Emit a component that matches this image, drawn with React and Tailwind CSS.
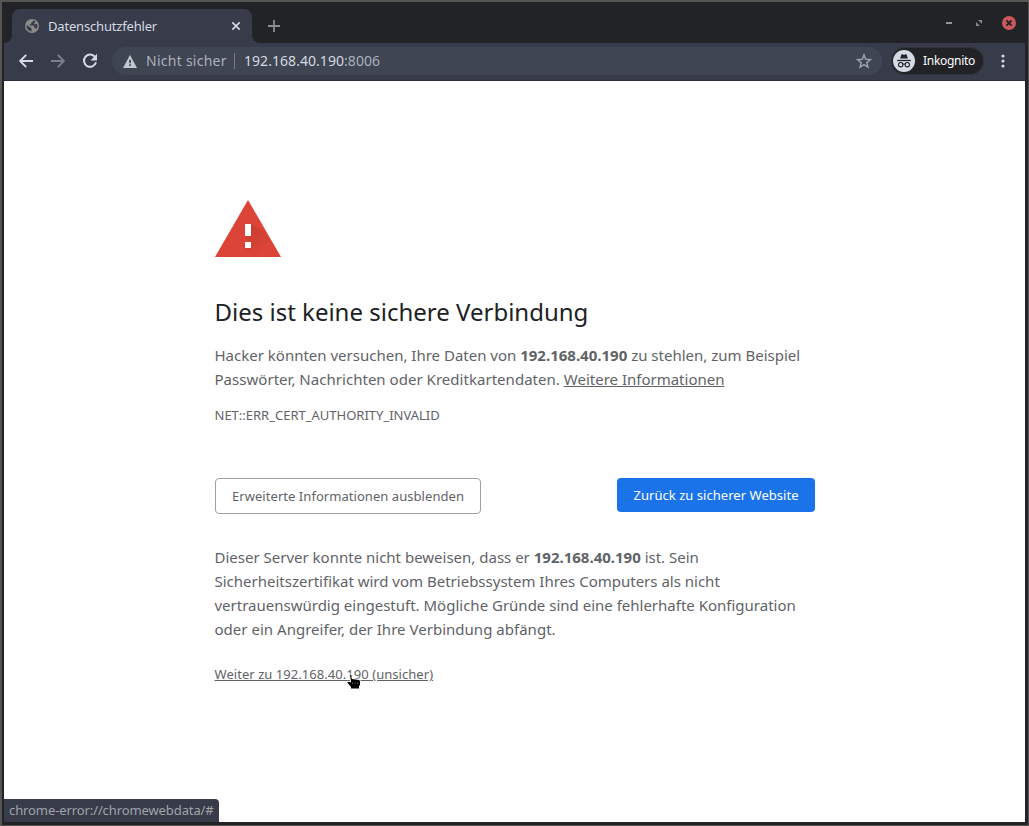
import React from "react";

function TabCurve({ flip }) {
  return (
    <svg width="8" height="8" viewBox="0 0 8 8" className={flip ? "-scale-x-100" : ""}>
      <path d="M8 0v8H0a8 8 0 0 0 8-8z" fill="#383c4a" />
    </svg>
  );
}

function TabStrip() {
  return (
    <div className="flex h-[41px] items-end bg-[#222327]">
      <TabCurve />
      <div className="flex h-[34px] w-[240px] shrink-0 items-center rounded-t-lg bg-[#383c4a] pr-[11px] pl-[13px]">
        <svg width="14" height="14" viewBox="0 0 14 14" className="shrink-0">
          <circle cx="7" cy="7" r="7" fill="#8c8c8b" />
          <path d="M1.5 5.8 4.6 8.2q1.9.2 1.9 1.4v2.8A5.6 5.6 0 0 1 1.5 5.8z" fill="#383c4a" />
          <path d="M7.8 1.5v1.4L6.2 3.8v1.5H4.6v1.3h3.6l1.1 1v1.6h1.4l.9.8a5.6 5.6 0 0 0 .5-5.2L9.2 5.6V4l1.4-1.4A5.6 5.6 0 0 0 7.8 1.5z" fill="#383c4a" />
        </svg>
        <span className="ml-[9px] flex-1 text-[13px] leading-[18px] tracking-[-0.18px] text-[#d3dae3]">Datenschutzfehler</span>
        <svg width="10" height="10" viewBox="0 0 10 10">
          <path d="m1.3 1.3 7.4 7.4m0-7.4L1.3 8.7" stroke="#d3dae3" strokeWidth="1.7" />
        </svg>
      </div>
      <TabCurve flip />
      <svg width="12" height="12" viewBox="0 0 12 12" className="mb-[11px] ml-2">
        <path d="M6 0v12M0 6h12" stroke="#8c8c8e" strokeWidth="1.8" />
      </svg>
      <div className="mr-[9px] mb-[13px] ml-auto flex items-center">
        <span className="h-[2px] w-[6px] bg-[#929497]" />
        <svg width="6" height="6" viewBox="0 0 6 6" className="ml-6">
          <path d="M2 0h4v4zM0 2v4h4z" fill="#858789" />
        </svg>
        <svg width="14" height="14" viewBox="0 0 14 14" className="ml-5">
          <circle cx="7" cy="7" r="7" fill="#cc575d" />
          <path d="m4.4 4.4 5.2 5.2m0-5.2L4.4 9.6" stroke="#222327" strokeWidth="1.8" />
        </svg>
      </div>
    </div>
  );
}

function Toolbar() {
  return (
    <div className="flex h-[38px] items-center border-b border-[#2b2e39] bg-[#383c4a] pb-px pl-[15px]">
      <svg width="14" height="14" viewBox="0 0 14 14" className="shrink-0">
        <path d="M7.2.8 1.2 7l6 6.2M1.2 7H14" fill="none" stroke="#d3dae3" strokeWidth="1.9" />
      </svg>
      <svg width="14" height="14" viewBox="0 0 14 14" className="ml-[18px] shrink-0">
        <path d="m6.8.8 6 6.2-6 6.2M12.8 7H0" fill="none" stroke="#7b7f89" strokeWidth="1.9" />
      </svg>
      <svg width="16" height="16" viewBox="0 0 16 16" className="ml-[17px] shrink-0">
        <path d="M13.2 4.3A6.1 6.1 0 1 0 14 9.3" fill="none" stroke="#d3dae3" strokeWidth="2" />
        <path d="M15 .8v6.6H8.5z" fill="#d3dae3" />
      </svg>
      <div className="ml-[14px] flex h-7 w-[770px] shrink-0 items-center rounded-full bg-[#404552] pr-[10px] pl-[11px] text-[14px] leading-5">
        <svg width="14" height="13" viewBox="0 0 14 13" className="shrink-0">
          <path d="M7 0 14 13H0z" fill="#c2c8d0" />
          <path d="M6.2 4.8h1.7v3.4H6.2zm0 4.5h1.7v1.6H6.2z" fill="#404552" />
        </svg>
        <span className="ml-[9px] w-[81px] tracking-[0.26px] whitespace-nowrap text-[#a9b1bc]">Nicht sicher</span>
        <span className="ml-[7px] h-4 w-px bg-[#777c87]" />
        <span className="ml-[9px] flex-1 tracking-[0.05px] text-[#d3dae3]">
          192.168.40.190<span className="text-[#a9b1bc]">:8006</span>
        </span>
        <svg width="16" height="16" viewBox="0 0 16 16">
          <path d="m8 1.8 1.7 4.5 4.8.3-3.7 3 1.2 4.6L8 11.6l-4 2.6 1.2-4.6-3.7-3 4.8-.3z" fill="none" stroke="#9da3ad" strokeWidth="1.4" />
        </svg>
      </div>
      <div className="ml-[10px] flex h-[26px] w-[91px] shrink-0 items-center rounded-full bg-[#222327] pl-px ring-1 ring-[#30333c]">
        <svg width="22" height="22" viewBox="0 0 22 22" className="shrink-0">
          <circle cx="11" cy="11" r="11" fill="#d3dae3" />
          <path d="M7.2 8.4 8.3 4.7q.2-.6.9-.4l1.8.5 1.8-.5q.7-.2.9.4l1.1 3.7z" fill="#222327" />
          <path d="M4.3 10.5h13.4" stroke="#222327" strokeWidth="1.3" />
          <circle cx="7.7" cy="14.7" r="2.2" fill="none" stroke="#222327" strokeWidth="1.1" />
          <circle cx="14.3" cy="14.7" r="2.2" fill="none" stroke="#222327" strokeWidth="1.1" />
          <path d="M9.9 14.3q1.1-.7 2.2 0" fill="none" stroke="#222327" />
        </svg>
        <span className="ml-[8px] text-[12px] leading-4 tracking-[-0.3px] text-white">Inkognito</span>
      </div>
      <svg width="4" height="14" viewBox="0 0 4 14" className="ml-[18px] shrink-0">
        <circle cx="2" cy="2" r="1.6" fill="#d3dae3" />
        <circle cx="2" cy="7" r="1.6" fill="#d3dae3" />
        <circle cx="2" cy="12" r="1.6" fill="#d3dae3" />
      </svg>
    </div>
  );
}

function WarningIcon() {
  return (
    <svg width="66" height="57" viewBox="0 0 66 57" className="ml-[0.5px]">
      <defs>
        <linearGradient id="shade" x1="0" y1="0" x2="1" y2="1">
          <stop offset="0" stopColor="#b8352a" stopOpacity=".6" />
          <stop offset=".65" stopColor="#b8352a" stopOpacity="0" />
        </linearGradient>
      </defs>
      <path d="M33 0 66 57H0z" fill="#db4437" />
      <path d="m36 24 12.7 7.5L63.5 57H39l-9-9 6-6-6-6z" fill="url(#shade)" />
      <path d="M30 24h6v12h-6zm0 18h6v6h-6z" fill="#fff" />
    </svg>
  );
}

function HandCursor() {
  return (
    <svg width="16" height="18" viewBox="0 0 16 18" className="absolute top-[11px] left-[131px]">
      <path
        d="M3.5 1.5q1.5-1 2.5.5v3.5l7 1q1.5.5 1.5 2v3.5l-1 1v3H4.5v-2l-3.5-4V8.500h2.500l1 .5z"
        fill="#000"
        stroke="#fff"
        strokeWidth="1"
      />
      <path d="M6.500 9.500v1.500m2.500-1.500v1.500m2.500-1.500v1.500" stroke="#777" strokeWidth=".7" />
    </svg>
  );
}

function ErrorPage() {
  return (
    <div className="flex w-[600.5px] flex-col pt-[119px] text-[15px] leading-6 whitespace-nowrap text-[#5f6368]">
      <WarningIcon />
      <h1 className="mt-10 text-[24px] leading-[30px] text-[#202124]">Dies ist keine sichere Verbindung</h1>
      <p className="mt-4">
        Hacker könnten versuchen, Ihre Daten von <b>192.168.40.190</b> zu stehlen, zum Beispiel
        <br />
        <span className="tracking-[0.03px]">Passwörter, Nachrichten oder Kreditkartendaten.</span> <a className="underline">Weitere Informationen</a>
      </p>
      <p className="mt-3 text-[13px]">NET::ERR_CERT_AUTHORITY_INVALID</p>
      <div className="mt-[51px] ml-[0.5px] flex items-start justify-between text-[13px]">
        <button className="h-9 w-[266px] rounded border border-[#9aa0a6] tracking-[0.05px]">Erweiterte Informationen ausblenden</button>
        <button className="h-[34px] w-[198px] rounded bg-[#1a73e8] tracking-[0.04px] text-white">Zurück zu sicherer Website</button>
      </div>
      <p className="mt-[31px]">
        Dieser Server konnte nicht beweisen, dass er <b>192.168.40.190</b> ist. Sein
        <br />
        Sicherheitszertifikat wird vom Betriebssystem Ihres Computers als nicht
        <br />
        vertrauenswürdig eingestuft. Mögliche Gründe sind eine fehlerhafte Konfiguration
        <br />
        <span className="tracking-[0.02px]">oder ein Angreifer, der Ihre Verbindung abfängt.</span>
      </p>
      <p className="relative mt-[21px] text-[13px] tracking-[0.05px]">
        <a className="underline">Weiter zu 192.168.40.190 (unsicher)</a>
        <HandCursor />
      </p>
    </div>
  );
}

export default function App() {
  return (
    <div className="h-[826px] w-[1029px] overflow-hidden bg-[#555653] pt-[2px] pr-px pb-px pl-[2px] font-['Noto_Sans',sans-serif]">
      <div className="flex h-full flex-col bg-[#222327] pr-[3px] pb-[3px] pl-[2px]">
        <TabStrip />
        <Toolbar />
        <main className="relative flex flex-1 flex-col bg-white pl-[210.5px]">
          <ErrorPage />
          <div className="absolute bottom-0 left-0 flex h-[23px] w-[215px] items-center rounded-tr bg-[#383c4a] pl-[5px] text-[13px] tracking-[-0.1px] whitespace-nowrap text-[#a0a3a8]">
            chrome-error://chromewebdata/#
          </div>
        </main>
      </div>
    </div>
  );
}
